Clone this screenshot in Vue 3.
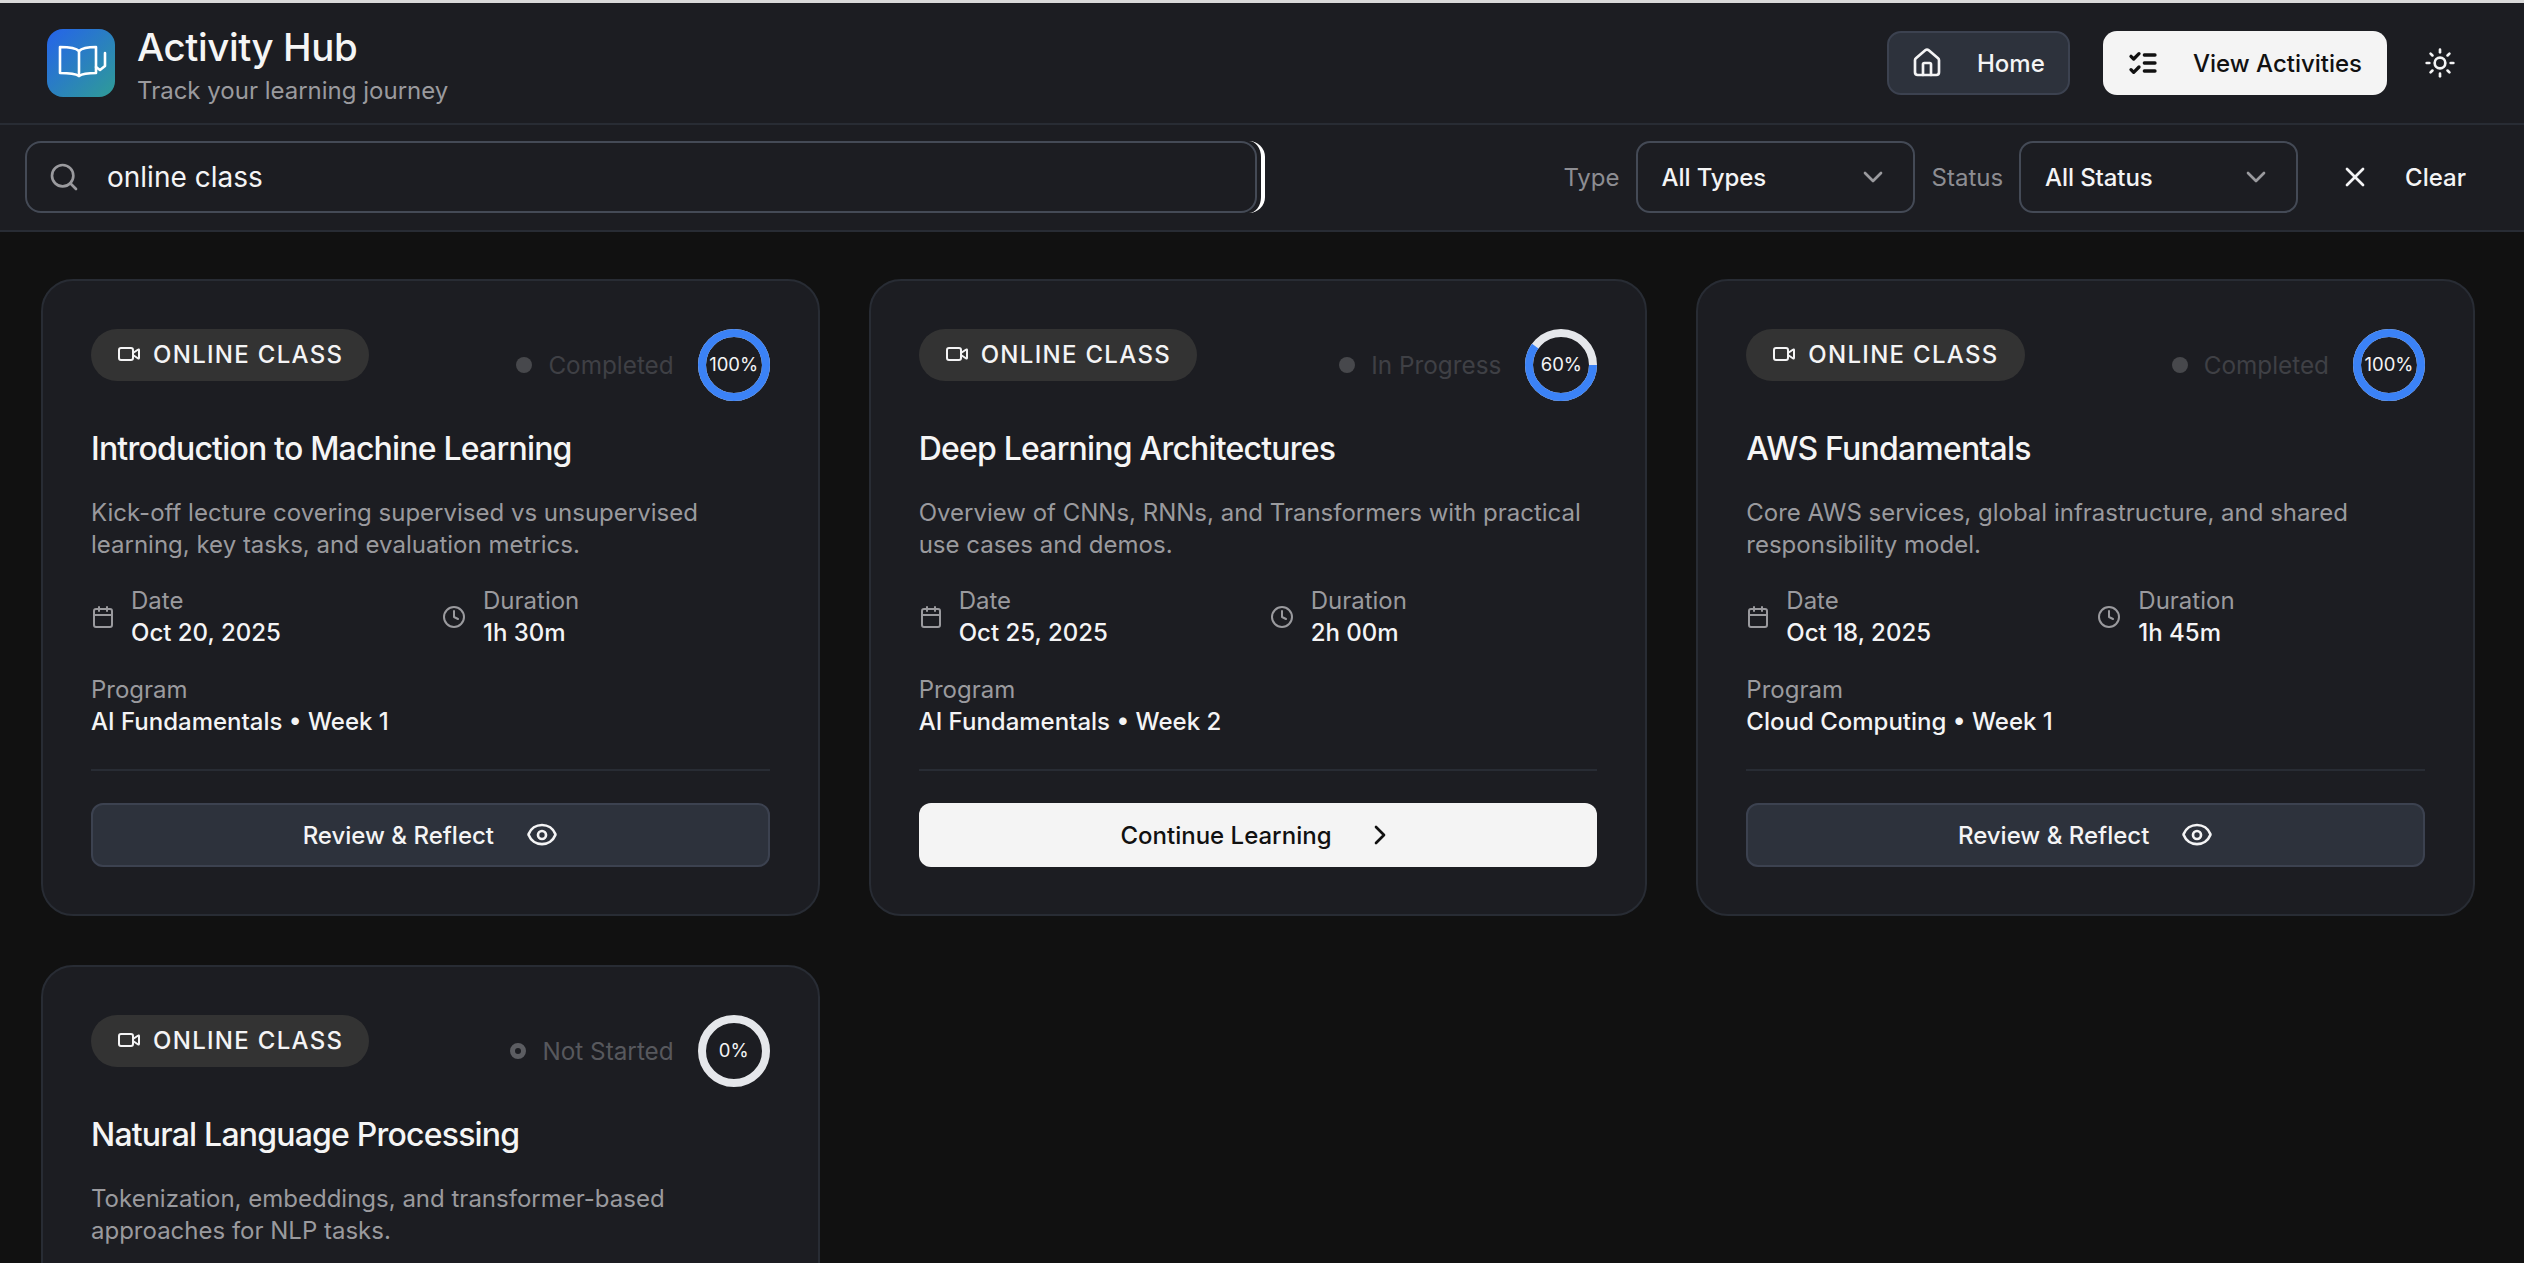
<script setup>
const cards = [
  { title: 'Introduction to Machine Learning', desc: 'Kick-off lecture covering supervised vs unsupervised learning, key tasks, and evaluation metrics.', date: 'Oct 20, 2025', dur: '1h 30m', program: 'AI Fundamentals • Week 1', status: 'Completed', pct: 100, action: 'review' },
  { title: 'Deep Learning Architectures', desc: 'Overview of CNNs, RNNs, and Transformers with practical use cases and demos.', date: 'Oct 25, 2025', dur: '2h 00m', program: 'AI Fundamentals • Week 2', status: 'In Progress', pct: 60, action: 'continue' },
  { title: 'AWS Fundamentals', desc: 'Core AWS services, global infrastructure, and shared responsibility model.', date: 'Oct 18, 2025', dur: '1h 45m', program: 'Cloud Computing • Week 1', status: 'Completed', pct: 100, action: 'review' },
  { title: 'Natural Language Processing', desc: 'Tokenization, embeddings, and transformer-based approaches for NLP tasks.', status: 'Not Started', pct: 0 },
]
const C = 2 * Math.PI * 32
</script>

<template>
  <div class="app">
    <header class="top">
      <div class="brand">
        <div class="logo">
          <svg viewBox="0 0 52 52" width="52" height="52" fill="none" stroke="#fff" stroke-width="2.6" stroke-linecap="round" stroke-linejoin="round">
            <path d="M24 14C21 11 15 10 5 10V36C15 36 21 37 24 39C27 37 33 36 41 36V10C33 10 27 11 24 14Z"/>
            <path d="M24 14V39"/>
            <path d="M41 30L45 33L50 29V16"/>
          </svg>
        </div>
        <div class="brand-text">
          <div class="brand-title">Activity Hub</div>
          <div class="brand-sub">Track your learning journey</div>
        </div>
      </div>
      <nav class="nav">
        <button class="nav-btn home">
          <svg class="ic32" viewBox="0 0 24 24"><path d="M15 21v-8a1 1 0 0 0-1-1h-4a1 1 0 0 0-1 1v8"/><path d="M3 10a2 2 0 0 1 .7-1.5l7-6a2 2 0 0 1 2.6 0l7 6A2 2 0 0 1 21 10v9a2 2 0 0 1-2 2H5a2 2 0 0 1-2-2z"/></svg>
          <span>Home</span>
        </button>
        <button class="nav-btn active">
          <svg class="ic32 bold" viewBox="0 0 24 24"><path d="m3 17 2 2 4-4"/><path d="m3 7 2 2 4-4"/><path d="M13 6h8"/><path d="M13 12h8"/><path d="M13 18h8"/></svg>
          <span>View Activities</span>
        </button>
        <svg class="ic32 sun" viewBox="0 0 24 24"><circle cx="12" cy="12" r="4"/><path d="M12 2v2"/><path d="M12 20v2"/><path d="m4.93 4.93 1.41 1.41"/><path d="m17.66 17.66 1.41 1.41"/><path d="M2 12h2"/><path d="M20 12h2"/><path d="m6.34 17.66-1.41 1.41"/><path d="m19.07 4.93-1.41 1.41"/></svg>
      </nav>
    </header>

    <section class="filters">
      <div class="search-wrap">
        <div class="search">
          <svg class="ic32 muted" viewBox="0 0 24 24"><circle cx="11" cy="11" r="8"/><path d="m21 21-4.3-4.3"/></svg>
          <span>online class</span>
        </div>
      </div>
      <div class="filter-right">
        <span class="f-label">Type</span>
        <div class="select"><span>All Types</span><svg class="ic32 muted" viewBox="0 0 24 24"><path d="m6 9 6 6 6-6"/></svg></div>
        <span class="f-label">Status</span>
        <div class="select"><span>All Status</span><svg class="ic32 muted" viewBox="0 0 24 24"><path d="m6 9 6 6 6-6"/></svg></div>
        <button class="clear">
          <svg class="ic32" viewBox="0 0 24 24"><path d="M18 6 6 18"/><path d="m6 6 12 12"/></svg>
          <span>Clear</span>
        </button>
      </div>
    </section>

    <main class="grid">
      <article v-for="c in cards" :key="c.title" class="card">
        <div class="card-top">
          <div class="badge">
            <svg class="ic24" viewBox="0 0 24 24"><path d="m16 13 5.2 3.5a.5.5 0 0 0 .8-.4V7.9a.5.5 0 0 0-.8-.4L16 11"/><rect x="2" y="6" width="14" height="12" rx="2"/></svg>
            <span>ONLINE CLASS</span>
          </div>
          <div class="status-wrap">
            <div class="status" :class="{ idle: c.pct === 0 }">
              <i class="dot"></i>
              <span>{{ c.status }}</span>
            </div>
            <div class="ring">
              <svg viewBox="0 0 72 72" width="72" height="72">
                <circle cx="36" cy="36" r="32" fill="none" stroke="#e5e7eb" stroke-width="8"/>
                <circle v-if="c.pct > 0" cx="36" cy="36" r="32" fill="none" stroke="#3b82f6" stroke-width="8" :stroke-dasharray="`${C * c.pct / 100} ${C}`"/>
              </svg>
              <span>{{ c.pct }}%</span>
            </div>
          </div>
        </div>
        <h3 class="title">{{ c.title }}</h3>
        <p class="desc">{{ c.desc }}</p>
        <template v-if="c.date">
          <div class="meta">
            <div class="meta-item">
              <svg class="ic24 muted" viewBox="0 0 24 24"><path d="M8 2v4"/><path d="M16 2v4"/><rect x="3" y="4" width="18" height="18" rx="2"/><path d="M3 10h18"/></svg>
              <div><div class="label">Date</div><div class="value">{{ c.date }}</div></div>
            </div>
            <div class="meta-item">
              <svg class="ic24 muted" viewBox="0 0 24 24"><circle cx="12" cy="12" r="10"/><path d="M12 6v6l4 2"/></svg>
              <div><div class="label">Duration</div><div class="value">{{ c.dur }}</div></div>
            </div>
          </div>
          <div class="program">
            <div class="label">Program</div>
            <div class="value">{{ c.program }}</div>
          </div>
          <div class="foot">
            <button v-if="c.action === 'review'" class="act review">
              <span>Review &amp; Reflect</span>
              <svg class="ic32" viewBox="0 0 24 24"><path d="M2 12a1 1 0 0 1 0-.7 10.75 10.75 0 0 1 20 0 1 1 0 0 1 0 .7 10.75 10.75 0 0 1-20 0"/><circle cx="12" cy="12" r="3"/></svg>
            </button>
            <button v-else class="act cont">
              <span>Continue Learning</span>
              <svg class="ic32" viewBox="0 0 24 24"><path d="m9 18 6-6-6-6"/></svg>
            </button>
          </div>
        </template>
      </article>
    </main>
  </div>
</template>

<style>
html, body { margin: 0; height: 100%; overflow: hidden; background: #111111; }
</style>

<style scoped>
.app { height: 1263px; overflow: hidden; background: #111111; border-top: 3px solid #d9d9d9; box-sizing: border-box; font-family: Inter, "Liberation Sans", sans-serif; color: #f4f4f5; }
svg { display: block; flex: none; }
.ic24, .ic32 { fill: none; stroke: currentColor; stroke-width: 2; stroke-linecap: round; stroke-linejoin: round; }
.ic24 { width: 24px; height: 24px; }
.ic32 { width: 32px; height: 32px; }
.bold { stroke-width: 2.5; }
.muted { color: #9a9a9e; }
button { font: inherit; color: inherit; background: none; border: 0; cursor: pointer; }

.top { height: 122px; box-sizing: border-box; background: #1c1d22; border-bottom: 2px solid #282c34; display: flex; align-items: center; justify-content: space-between; padding: 0 68px 0 47px; }
.brand { display: flex; align-items: center; gap: 22px; }
.logo { width: 68px; height: 68px; border-radius: 16px; background: linear-gradient(135deg, #2563eb, #2f9c96); display: flex; align-items: center; justify-content: center; }
.brand-text { padding-top: 6px; }
.brand-title { font-size: 38.4px; line-height: 46px; font-weight: 500; color: #f5f5f5; letter-spacing: -0.4px; }
.brand-sub { margin-top: 4px; font-size: 24px; line-height: 34px; color: #9a9a9e; }
.nav { display: flex; align-items: center; }
.nav-btn { height: 64px; box-sizing: border-box; border-radius: 14px; display: flex; align-items: center; gap: 34px; font-size: 24px; font-weight: 500; white-space: nowrap; }
.home { width: 183px; padding: 0 22px; background: #2d323c; border: 2px solid #3c4250; color: #f4f4f5; margin-right: 33px; }
.active { width: 284px; padding: 0 24px; background: #f4f4f4; color: #111; border: 0; margin-right: 37px; }
.sun { color: #f4f4f5; }

.filters { height: 107px; box-sizing: border-box; background: #1c1d22; border-bottom: 2px solid #282c34; display: flex; align-items: flex-start; padding: 16px 58px 0 25px; justify-content: space-between; }
.search-wrap { width: 1240px; border-right: 4px solid #fff; border-radius: 16px; box-sizing: border-box; }
.search { width: 1232px; height: 72px; box-sizing: border-box; border: 2px solid #444a56; border-radius: 16px; display: flex; align-items: center; gap: 27px; padding: 0 21px; font-size: 28px; color: #f4f4f5; }
.filter-right { display: flex; align-items: center; }
.f-label { font-size: 24px; color: #8d8d92; margin-right: 16px; }
.select { width: 279px; height: 72px; box-sizing: border-box; border: 2px solid #444a56; border-radius: 14px; display: flex; align-items: center; justify-content: space-between; padding: 0 24px; font-size: 24px; font-weight: 500; letter-spacing: -0.1px; margin-right: 17px; }
.clear { display: flex; align-items: center; gap: 34px; font-size: 24px; font-weight: 500; margin-left: 24px; padding: 0; }

.grid { display: grid; grid-template-columns: repeat(3, 778.67px); gap: 49px; padding: 47px 50px 0 41px; }
.card { background: #1c1d22; border: 2px solid #282c34; border-radius: 32px; padding: 48px; box-sizing: border-box; height: 637px; }
.card-top { display: flex; justify-content: space-between; align-items: flex-start; }
.badge { height: 52px; padding: 0 26px 2px; box-sizing: border-box; border-radius: 26px; background: #333333; display: flex; align-items: center; gap: 12px; font-size: 24px; font-weight: 500; letter-spacing: 1.3px; color: #f4f4f5; }
.status-wrap { display: flex; align-items: center; gap: 24px; }
.status { display: flex; align-items: center; gap: 16px; font-size: 24.3px; color: #3f4045; }
.dot { width: 16px; height: 16px; flex: none; border-radius: 50%; background: #47484c; box-sizing: border-box; }
.status.idle { color: #57585d; }
.status.idle .dot { background: transparent; border: 5px solid #5c5d62; }
.ring { position: relative; width: 72px; height: 72px; }
.ring span { position: absolute; inset: 0 0 2px; display: flex; align-items: center; justify-content: center; font-size: 18.5px; font-weight: 400; color: #f4f4f5; }
.title { margin: 27px 0 0; font-size: 32px; line-height: 42px; font-weight: 500; color: #f5f5f5; letter-spacing: -0.8px; }
.desc { margin: 27px 0 0; font-size: 24px; line-height: 32px; color: #9a9a9e; }
.meta { display: grid; grid-template-columns: 351px 1fr; margin-top: 24px; }
.meta-item { display: flex; align-items: center; gap: 16px; }
.meta-item + .meta-item { gap: 17px; }
.label { font-size: 24px; line-height: 32px; color: #9a9a9e; }
.value { font-size: 24px; line-height: 32px; font-weight: 500; color: #f4f4f5; }
.program { margin-top: 25px; }
.foot { margin-top: 31px; padding-top: 32px; border-top: 2px solid #282c34; }
.act { width: 100%; height: 64px; box-sizing: border-box; border-radius: 12px; display: flex; align-items: center; justify-content: center; gap: 32px; font-size: 24px; font-weight: 500; }
.review { background: #2d323c; border: 2px solid #3c4250; color: #f4f4f5; }
.cont { background: #f4f4f4; color: #111; }
</style>
